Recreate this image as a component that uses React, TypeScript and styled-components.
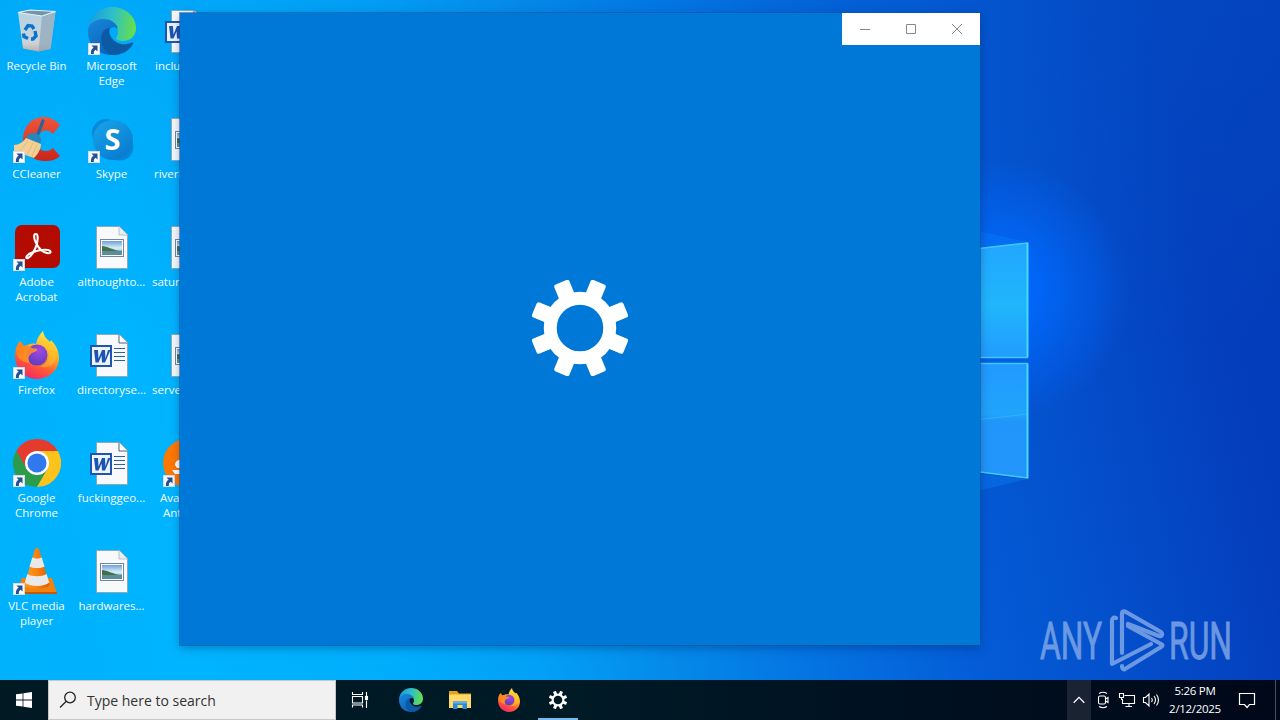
import type {ReactNode} from 'react';
import styled, {createGlobalStyle} from 'styled-components';

type IconName =
    | 'bin'
    | 'edge'
    | 'word'
    | 'ccleaner'
    | 'skype'
    | 'image'
    | 'acrobat'
    | 'firefox'
    | 'chrome'
    | 'avast'
    | 'vlc';

interface Shortcut {
    icon: IconName;
    lines: string[];
    linked?: boolean;
    indent?: number;
}

const COLUMNS: Shortcut[][] = [
    [
        {icon: 'bin', lines: ['Recycle Bin']},
        {icon: 'ccleaner', lines: ['CCleaner'], linked: true},
        {icon: 'acrobat', lines: ['Adobe', 'Acrobat'], linked: true},
        {icon: 'firefox', lines: ['Firefox'], linked: true},
        {icon: 'chrome', lines: ['Google', 'Chrome'], linked: true},
        {icon: 'vlc', lines: ['VLC media', 'player'], linked: true},
    ],
    [
        {icon: 'edge', lines: ['Microsoft', 'Edge'], linked: true},
        {icon: 'skype', lines: ['Skype'], linked: true},
        {icon: 'image', lines: ['althoughto...']},
        {icon: 'word', lines: ['directoryse...']},
        {icon: 'word', lines: ['fuckinggeo...']},
        {icon: 'image', lines: ['hardwares...']},
    ],
    [
        {icon: 'word', lines: ['include...'], indent: 5},
        {icon: 'image', lines: ['riverl...'], indent: 4},
        {icon: 'image', lines: ['saturn...'], indent: 2},
        {icon: 'image', lines: ['server...'], indent: 2},
        {icon: 'avast', lines: ['Avast', ' Anti'], linked: true, indent: 10},
    ],
];

const GEAR_ANGLES = [22.5, 67.5, 112.5, 157.5, 202.5, 247.5, 292.5, 337.5];

const Gradients = () => (
    <HiddenSvg width='0' height='0' aria-hidden>
        <defs>
            <linearGradient id='edgeTop' x1='0' y1='0.4' x2='1' y2='0.5'>
                <stop offset='0' stopColor='#199bdd' />
                <stop offset='0.5' stopColor='#2ec0c8' />
                <stop offset='1' stopColor='#68e047' />
            </linearGradient>
            <linearGradient id='edgeLeft' x1='0' y1='0' x2='0.6' y2='1'>
                <stop offset='0' stopColor='#1688dd' />
                <stop offset='1' stopColor='#0c62b8' />
            </linearGradient>
            <linearGradient id='fox' x1='0.75' y1='0' x2='0.3' y2='1'>
                <stop offset='0' stopColor='#fff24a' />
                <stop offset='0.4' stopColor='#ffac25' />
                <stop offset='0.7' stopColor='#ff5a36' />
                <stop offset='1' stopColor='#f5246e' />
            </linearGradient>
            <linearGradient id='foxSwirl' x1='0' y1='0' x2='1' y2='1'>
                <stop offset='0' stopColor='#ff7a16' />
                <stop offset='1' stopColor='#ff9d2b' />
            </linearGradient>
            <radialGradient id='globe' cx='0.6' cy='0.3' r='0.8'>
                <stop offset='0' stopColor='#a347e0' />
                <stop offset='1' stopColor='#553bbd' />
            </radialGradient>
            <linearGradient id='skypeBlue' x1='0' y1='0' x2='0.7' y2='1'>
                <stop offset='0' stopColor='#18a6ea' />
                <stop offset='1' stopColor='#087bd0' />
            </linearGradient>
            <linearGradient id='binSide' x1='0' y1='0' x2='0' y2='1'>
                <stop offset='0' stopColor='#b6d2e2' />
                <stop offset='0.8' stopColor='#c9d3da' />
                <stop offset='1' stopColor='#c2aca2' />
            </linearGradient>
            <linearGradient id='ccRed' x1='0' y1='0' x2='0' y2='1'>
                <stop offset='0' stopColor='#f0553b' />
                <stop offset='1' stopColor='#c9251a' />
            </linearGradient>
            <linearGradient id='cone' x1='0' y1='0' x2='1' y2='0'>
                <stop offset='0' stopColor='#ff9a1c' />
                <stop offset='0.5' stopColor='#f88210' />
                <stop offset='1' stopColor='#dd5c00' />
            </linearGradient>
            <linearGradient id='landscape' x1='0' y1='0' x2='0' y2='1'>
                <stop offset='0' stopColor='#6e9fe0' />
                <stop offset='0.5' stopColor='#d8eef2' />
                <stop offset='1' stopColor='#7fb2bb' />
            </linearGradient>
            <linearGradient id='paneTop' x1='0' y1='0' x2='0' y2='1'>
                <stop offset='0' stopColor='#22a6ff' />
                <stop offset='0.55' stopColor='#20b6fc' />
                <stop offset='1' stopColor='#229cff' />
            </linearGradient>
            <linearGradient id='paneBottom' x1='0' y1='0' x2='0' y2='1'>
                <stop offset='0' stopColor='#2299ff' />
                <stop offset='0.44' stopColor='#20a4fb' />
                <stop offset='0.5' stopColor='#2196fa' />
                <stop offset='1' stopColor='#2295fa' />
            </linearGradient>
        </defs>
    </HiddenSvg>
);

const EdgeArt = () => (
    <>
        <path d='M0 22C2 8 12 0 24 0c14 0 24 10 24 21 0 9-7 13-13 13-4 0-7-1-7-3 0-1 2-2 2-6 0-5-5-11-14-11-8 0-13 4-16 8z' fill='url(#edgeTop)' />
        <path d='M0 24c0-7 7-12 15-12 9 0 14 5 15 10-4-4-10-1-11 5-1 9 5 17 13 20-3 1-5 1-8 1C10 48 0 38 0 24z' fill='url(#edgeLeft)' />
        <path d='M14 27c-3 9 2 18 11 21 9 0 16-4 20-11 .5-1.500-.5-2-2-1.200-8 3.500-16 .5-20-5.800-2-3-2-6-1-9-4 0-7 3-8 6z' fill='#0c59a4' />
    </>
);

const FirefoxArt = () => (
    <>
        <path d='M2 25C2 18 4 14 7 10l1 4 4 1c4-2 7-3 11-2 1-6 4-10 7-13 1 6 4 8 7 11l1-2c5 5 8 11 8 18 0 12-10 21-22 21S2 38 2 25z' fill='url(#fox)' />
        <circle cx='24' cy='24' r='10.5' fill='url(#globe)' />
        <path d='M4 15l4-5 3 5c4-1 6 0 8 2 2 1 4 0 5 1 1 3-5 3-6 5-3 2-3 6-1 9-7-1-12-4-13-9-1-3-1-5 0-8z' fill='url(#foxSwirl)' opacity='0.9' />
        <path d='M24 13c8-1 13 5 12 13-1 6-6 9-10 9 10 4 18-3 18-12 0-7-5-11-9-14-3 1-7 0-11 4z' fill='#ffc52e' opacity='0.5' />
    </>
);

const SkypeArt = () => (
    <>
        <circle cx='18' cy='18' r='14' fill='#078bd8' />
        <circle cx='32' cy='32' r='13.5' fill='#0588da' />
        <circle cx='25' cy='25' r='20' fill='url(#skypeBlue)' />
        <SkypeLetter x='24.5' y='34.5' textAnchor='middle'>
            S
        </SkypeLetter>
    </>
);

const DocumentPage = () => (
    <path d='M8.5 3.5h23l8 8v34h-31z' fill='#f8f9fb' stroke='#8f9daa' strokeWidth='0.8' />
);

const ART: Record<IconName, ReactNode> = {
    bin: (
        <>
            <path d='M5 5.5L17 3l25.500 1.500-5 37.500-12 2.500L10 41.500z' fill='url(#binSide)' />
            <path d='M5 5.5L17 3l25.500 1.500L29 9z' fill='#7793a6' />
            <path d='M29 9l13.500-4.500-5 37.500-12 2.500z' fill='#8aa3b6' opacity='0.65' />
            <path d='M5 5.500L17 3l25.500 1.500L29 9z' fill='none' stroke='#e4f1f7' strokeWidth='1.2' />
            <g fill='none' stroke='#0b73cb' strokeWidth='3.4'>
                <path d='M12 23l3-4.500 4 .5 2 3' />
                <path d='M22 24l1 5-3 3h-2' />
                <path d='M15 31.500l-4-2-.5-3' />
            </g>
        </>
    ),
    edge: <EdgeArt />,
    word: (
        <>
            <DocumentPage />
            <path d='M31 3.5v8.5h8.5' fill='#fff' stroke='#4f6580' strokeWidth='1' />
            <path d='M26 17.500h11M26 21.5h11M26 25.5h11M26 29.500h11' stroke='#2a5fae' strokeWidth='1.2' />
            <rect x='3' y='15' width='20' height='20' fill='#eef4ff' stroke='#1f55b0' strokeWidth='2' />
            <path d='M6 19h4l.5 8.500L14 19h3l.5 8.500L20 19h2.500l-5.500 12.500h-3l-.5-7-3 7h-3z' fill='#1c54b2' />
        </>
    ),
    image: (
        <>
            <DocumentPage />
            <path d='M31 3.5v8.5h8.5' fill='#e7edf2' stroke='#a8b7c4' strokeWidth='0.8' />
            <rect x='12.5' y='16.5' width='23' height='17' fill='#fff' stroke='#71889c' />
            <rect x='14' y='18' width='20' height='14' fill='url(#landscape)' />
            <path d='M14 23c5 0 10 4 20 5.500v1l-20-1z' fill='#426f4c' />
            <path d='M14 28.500l20-1V32H14z' fill='#5a8e9d' />
        </>
    ),
    ccleaner: (
        <>
            <path d='M47 10L40 19c-5-6-13-4-15 3-2 8 2 15 8 14 3 0 5-1 7-3l7 8c-4 4-9 5-15 5-13 0-22-9-22-21C10 11 19 2 31 2c6 0 12 3 16 8z' fill='url(#ccRed)' />
            <path d='M30 6l-7 18' stroke='#21679c' strokeWidth='3.2' strokeLinecap='round' />
            <path d='M13 23c2-5 7-6 11-4s5 6 3 11z' fill='#2787bd' />
            <path d='M13 23l15 6c0 6-4 11-7 14L1 36v-6c5 0 9-3 12-7z' fill='#f2cf94' />
            <path d='M15 26l-8 10M20 28l-6 12M24 30l-5 11' stroke='#e3bb7b' strokeWidth='1' />
        </>
    ),
    skype: <SkypeArt />,
    acrobat: (
        <>
            <rect x='2' y='2' width='45' height='43' rx='7' fill='#b30b00' />
            <path
                d='M23 11c-3 0-2 5 0 9s6 9 11 10c4 1 5-2 1-3-5-1-14 1-19 4-4 3-3 5-1 4 4-2 8-10 9-15 1-4 1-9-1-9z'
                fill='none'
                stroke='#fff'
                strokeWidth='2.1'
            />
        </>
    ),
    firefox: <FirefoxArt />,
    chrome: (
        <>
            <path d='M3.2 12a24 24 0 0 1 41.600 0H24L13.600 30z' fill='#e33b2e' />
            <path d='M34.4 30L24 48A24 24 0 0 1 3.200 12l10.400 18z' fill='#2a9c4b' />
            <path d='M24 12h20.800A24 24 0 0 1 24 48l10.400-18z' fill='#fbc31b' />
            <circle cx='24' cy='24' r='12' fill='#fff' />
            <circle cx='24' cy='24' r='9.6' fill='#2f78ee' />
        </>
    ),
    avast: (
        <>
            <circle cx='24' cy='24' r='24' fill='#ff7800' />
            <path d='M12 26c0-5 5-6 8-5v8h-6zM9 31h14v4H12z' fill='#fff' />
        </>
    ),
    vlc: (
        <>
            <path d='M9 31h30l5 15.500H3z' fill='#f08310' />
            <path d='M3 45h41v2H3z' fill='#c95600' />
            <path d='M22 2c1-1.500 3-1.500 4 0l10.500 36c-3 5-22 5-25 0z' fill='url(#cone)' />
            <path d='M19.3 10.500c3 1.500 6.500 1.500 9.500 0l2.700 9c-4 2-11 2-15 0zM14.300 27c5 3 14 3 19.300 0l2.600 8.500c-5 4.500-19.500 4.500-24.400 0z' fill='#e9e9e9' />
        </>
    ),
};

const ShortcutBadge = () => (
    <g>
        <rect x='0.5' y='36.5' width='11' height='11' fill='#f7f9fc' stroke='#d5dce4' />
        <path d='M3.500 38.500h6v6L7.700 42.700c-1.500.8-2 2-1.900 4.300H3c-.4-3 .4-5 2.600-6.300z' fill='#244f91' />
    </g>
);

const Gear = ({size, small}: {size: number; small?: boolean}) => (
    <svg width={size} height={size} viewBox='-50 -50 100 100'>
        <circle r={small ? 30 : 31} fill='none' stroke='#fff' strokeWidth={small ? 12 : 13.5} />
        {GEAR_ANGLES.map(angle => (
            <rect
                key={angle}
                x='-8.5'
                y='-51.5'
                width='17'
                height='20'
                rx='2.5'
                fill='#fff'
                transform={`rotate(${angle})`}
            />
        ))}
    </svg>
);

const DesktopIcon = ({icon, lines, linked, indent}: Shortcut) => (
    <IconCell>
        <svg width='48' height='48' viewBox='0 0 48 48'>
            {ART[icon]}
            {linked && <ShortcutBadge />}
        </svg>
        <IconLabel $indent={indent}>
            {lines.map(line => (
                <span key={line}>{line}</span>
            ))}
        </IconLabel>
    </IconCell>
);

const SettingsWindow = () => (
    <WindowFrame>
        <Caption>
            <CaptionButton aria-label='Minimize'>
                <svg width='12' height='12' fill='none' stroke='#888'>
                    <path d='M1 6.5h10' />
                </svg>
            </CaptionButton>
            <CaptionButton aria-label='Maximize'>
                <svg width='12' height='12' fill='none' stroke='#888'>
                    <path d='M1.5 1.5h9v9h-9z' />
                </svg>
            </CaptionButton>
            <CaptionButton aria-label='Close'>
                <svg width='12' height='12' fill='none' stroke='#888'>
                    <path d='M1 1l10 10M11 1L1 11' />
                </svg>
            </CaptionButton>
        </Caption>
        <Splash>
            <Gear size={96} />
        </Splash>
    </WindowFrame>
);

const WallpaperLogo = () => (
    <LogoLayer width='120' height='300' viewBox='940 210 120 300'>
        <path d='M940 222l87 20-87 14zM940 500v-30l87 9z' fill='#0a7cf5' opacity='0.4' />
        <path d='M940 253l88-10.500v115h-88z' fill='url(#paneTop)' />
        <path d='M940 363h88v115.500L940 467z' fill='url(#paneBottom)' />
        <path d='M940 424l88-10' stroke='#39b8fb' strokeWidth='1' opacity='0.7' />
        <path d='M940 253l87.500-10v114.500H940' fill='none' stroke='#42c9ff' strokeWidth='1.5' />
        <path d='M940 363.500h87.500V478L940 467' fill='none' stroke='#42c9ff' strokeWidth='1.5' />
        <path d='M1027.500 243v114M1027.500 364v114' stroke='#46dcff' strokeWidth='1.7' />
    </LogoLayer>
);

const Watermark = () => (
    <WatermarkLayer width='210' height='80' viewBox='0 0 210 80'>
        <text x='10' y='59' textLength='62' lengthAdjust='spacingAndGlyphs'>
            ANY
        </text>
        <text x='139' y='59' textLength='63' lengthAdjust='spacingAndGlyphs'>
            RUN
        </text>
        <g fill='none' stroke='currentColor' strokeWidth='4.2' strokeLinecap='round' strokeLinejoin='round'>
            <path d='M86 18c-3-1-4 1-4 3v43l39-20' />
            <path d='M92 53V14c0-3 2-3 4-2l35 20c2 2 1 5-2 4L98 24' />
            <path d='M98 26l33 18c2 1 2 2 0 3L95 69c-2 1-3-1-3-3' />
        </g>
    </WatermarkLayer>
);

const Taskbar = () => (
    <Bar>
        <StartButton aria-label='Start'>
            <svg width='16' height='16' viewBox='0 0 16 16' fill='#fff'>
                <path d='M0 2.300l6.600-.9v6.100H0zM7.400 1.200L16 0v7.500H7.400zM0 8.400h6.600v6.200L0 13.700zM7.400 8.400H16V16l-8.600-1.200z' />
            </svg>
        </StartButton>
        <SearchBox>
            <svg width='18' height='18' viewBox='0 0 18 18' fill='none' stroke='#222' strokeWidth='1.3'>
                <circle cx='11' cy='6.5' r='5.3' />
                <path d='M7 10.5L1 16.5' />
            </svg>
            <span>Type here to search</span>
        </SearchBox>
        <TaskView>
            <svg width='18' height='18' viewBox='0 0 18 18' fill='none' stroke='#fff' strokeWidth='1.1'>
                <path d='M1.5 1v2.500h10V1M1.5 16.5V14h10v2.5M1.5 5.5h10v6.500h-10zM15.5 1v4M15.5 9.5V17' />
                <rect x='14.5' y='5.5' width='2' height='3' fill='#fff' />
            </svg>
        </TaskView>
        <TaskButton>
            <svg width='24' height='24' viewBox='0 0 48 48'>
                <EdgeArt />
            </svg>
        </TaskButton>
        <TaskButton>
            <svg width='22' height='20' viewBox='0 0 22 20'>
                <path d='M0 1h8l2 2.500h12V18H0z' fill='#e9a018' />
                <path d='M0 4.500h22V18H0z' fill='#ffd868' />
                <path d='M4 11.500h14V19h-4.500v-4h-5v4H4z' fill='#2b8bd4' />
                <path d='M4 11.500h14v2H4z' fill='#5fb0ea' />
            </svg>
        </TaskButton>
        <TaskButton>
            <svg width='24' height='24' viewBox='0 0 48 48'>
                <FirefoxArt />
            </svg>
        </TaskButton>
        <TaskButton $active>
            <Gear size={18} small />
        </TaskButton>
        <Tray>
            <TrayChevron>
                <svg width='12' height='8' fill='none' stroke='#fff' strokeWidth='1.3'>
                    <path d='M.7 6.7L6 1.4l5.300 5.300' />
                </svg>
            </TrayChevron>
            <TrayIcon>
                <svg width='12' height='18' viewBox='-1 0 12 18' fill='none' stroke='#fff' strokeWidth='1.1'>
                    <path d='M1 2.500Q5 0 9 2.500M1 15.500q4 2.500 8 0' />
                    <rect x='0.5' y='5' width='7' height='8' rx='1.5' />
                    <path d='M7.500 8L10 6.500v5L7.500 10' />
                </svg>
            </TrayIcon>
            <TrayIcon>
                <svg width='18' height='16' viewBox='0 0 18 16' fill='none' stroke='#fff' strokeWidth='1.1'>
                    <path d='M6.5 3.5h10v8H4.5V7M11 11.5v3M7.5 14.5h6.500M1.5 1.5h4v4h-4zM3.5 5.5v2h1' />
                </svg>
            </TrayIcon>
            <TrayIcon>
                <svg width='18' height='16' viewBox='0 0 18 16' fill='none' stroke='#fff' strokeWidth='1.1'>
                    <path d='M1.5 5.5h2l3.500-3.500v12l-3.500-3.500h-2zM9.5 6q1.500 2 0 4M12 4q3 4 0 8M14.5 2.500q4 5.500 0 11' />
                </svg>
            </TrayIcon>
            <Clock>
                <span>5:26 PM</span>
                <span>2/12/2025</span>
            </Clock>
            <Notifications>
                <svg width='18' height='18' viewBox='0 0 18 18' fill='none' stroke='#fff' strokeWidth='1.2'>
                    <path d='M1.5 2.5h15v11h-5l-2.500 3-2.500-3h-5z' />
                </svg>
            </Notifications>
            <ShowDesktop />
        </Tray>
    </Bar>
);

const App = () => {
    return (
        <Screen>
            <GlobalStyle />
            <Gradients />
            <Desktop>
                <WallpaperLogo />
                <Watermark />
                {COLUMNS.map((column, index) => (
                    <IconColumn key={index}>
                        {column.map(item => (
                            <DesktopIcon key={item.lines[0]} {...item} />
                        ))}
                    </IconColumn>
                ))}
                <SettingsWindow />
            </Desktop>
            <Taskbar />
        </Screen>
    );
};

export default App;

const GlobalStyle = createGlobalStyle`
    body {
        margin: 0;
        overflow: hidden;
        font-family: 'Open Sans', 'Noto Sans', sans-serif;
    }
    svg {
        display: block;
        flex: none;
    }
`;
const HiddenSvg = styled.svg`
    position: absolute;
`;
const Screen = styled.div`
    width: 1280px;
    height: 720px;
    display: flex;
    flex-direction: column;
    overflow: hidden;
`;
const Desktop = styled.main`
    position: relative;
    height: 680px;
    display: flex;
    overflow: hidden;
    background:
        radial-gradient(ellipse 130px 130px at 1000px 290px, #006aff 0%, rgba(0, 106, 255, 0.8) 30%, rgba(0, 98, 240, 0) 100%),
        linear-gradient(180deg, rgba(0, 120, 220, 0.15) 0%, rgba(0, 120, 220, 0) 50%),
        linear-gradient(
            78deg,
            #00b1fc 0%,
            #00b4ff 14%,
            #00adfc 28%,
            #02a0f6 38%,
            #0488e8 48%,
            #0474e2 57%,
            #045cd6 69%,
            #044fcc 79%,
            #043ebc 91%,
            #033bb8 100%
        );
`;
const IconColumn = styled.div`
    display: flex;
    flex-direction: column;
    width: 75px;
`;
const IconCell = styled.div`
    height: 101px;
    padding-top: 7px;
    padding-right: 1px;
    display: flex;
    flex-direction: column;
    align-items: center;
`;
const IconLabel = styled.div<{$indent?: number}>`
    display: flex;
    flex-direction: column;
    align-items: ${({$indent}) => ($indent === undefined ? 'center' : 'flex-start')};
    align-self: stretch;
    padding-left: ${({$indent}) => $indent ?? 0}px;
    padding-right: 1px;
    margin-top: 3px;
    color: #f4fbff;
    font-size: 11.5px;
    line-height: 15px;
    white-space: pre;
`;
const SkypeLetter = styled.text`
    font-size: 29px;
    font-weight: 700;
    fill: #ffffff;
`;
const LogoLayer = styled.svg`
    position: absolute;
    left: 940px;
    top: 210px;
`;
const WatermarkLayer = styled.svg`
    position: absolute;
    left: 1030px;
    top: 600px;
    overflow: visible;
    color: #7da6e6;
    fill: #7da6e6;
    opacity: 0.85;
    font-family: Roboto, 'Liberation Sans', sans-serif;
    font-size: 52px;

    text {
        stroke: #7da6e6;
        stroke-width: 0.9px;
    }
`;
const WindowFrame = styled.section`
    position: absolute;
    left: 180px;
    top: 13px;
    width: 800px;
    height: 632px;
    display: flex;
    flex-direction: column;
    background-color: #0078d7;
    box-shadow:
        0 0 0 1px rgba(20, 80, 150, 0.55),
        0 3px 9px rgba(0, 30, 90, 0.35);
`;
const Caption = styled.header`
    align-self: flex-end;
    display: flex;
    height: 32px;
    background-color: #ffffff;
`;
const CaptionButton = styled.button`
    display: flex;
    justify-content: center;
    align-items: center;
    width: 46px;
    padding: 0;
    border: none;
    background: none;
`;
const Splash = styled.div`
    flex: 1;
    display: flex;
    justify-content: center;
    align-items: center;
    padding-bottom: 34px;
`;
const Bar = styled.footer`
    height: 40px;
    display: flex;
    background: linear-gradient(90deg, #001922 0%, #001a26 45%, #000f1f 75%, #000819 100%);
`;
const StartButton = styled.button`
    display: flex;
    justify-content: center;
    align-items: center;
    width: 48px;
    padding: 0;
    border: none;
    background: none;
`;
const SearchBox = styled.div`
    display: flex;
    align-items: center;
    gap: 10px;
    width: 288px;
    box-sizing: border-box;
    padding-left: 10px;
    border: 1px solid #c4c8ca;
    background-color: #f1f1f1;
    color: #333333;
    font-size: 14px;
    white-space: nowrap;
`;
const TaskView = styled.div`
    display: flex;
    justify-content: center;
    align-items: center;
    width: 48px;
    margin-right: 2px;
`;
const TaskButton = styled.div<{$active?: boolean}>`
    display: flex;
    justify-content: center;
    align-items: center;
    width: ${({$active}) => ($active ? 40 : 49)}px;
    margin-left: ${({$active}) => ($active ? 5 : 0)}px;
    box-shadow: ${({$active}) => ($active ? 'inset 0 -2px 0 #76b9ed' : 'none')};
`;
const Tray = styled.div`
    display: flex;
    margin-left: auto;
`;
const TrayChevron = styled.div`
    display: flex;
    justify-content: center;
    align-items: center;
    width: 24px;
    background-color: #1a2332;
`;
const TrayIcon = styled.div`
    display: flex;
    justify-content: center;
    align-items: center;
    width: 24px;
`;
const Clock = styled.div`
    display: flex;
    flex-direction: column;
    justify-content: center;
    align-items: center;
    width: 64px;
    color: #ffffff;
    font-size: 11.5px;
    line-height: 18px;
    letter-spacing: -0.3px;
    white-space: nowrap;
`;
const Notifications = styled.div`
    display: flex;
    justify-content: center;
    align-items: center;
    width: 40px;
`;
const ShowDesktop = styled.div`
    width: 4px;
    margin-left: 8px;
    border-left: 1px solid #4a5360;
`;
